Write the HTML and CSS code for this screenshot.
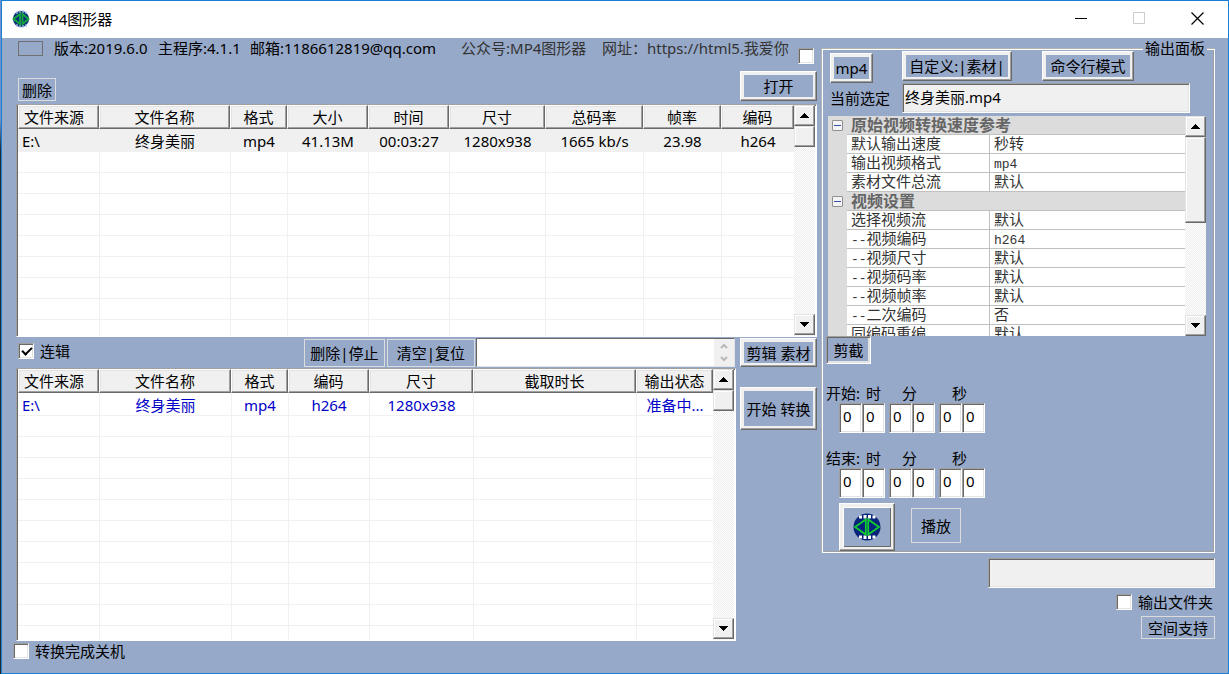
FILE: index.html
```html
<!DOCTYPE html>
<html lang="zh-CN">
<head>
<meta charset="utf-8">
<meta name="viewport" content="width=device-width, initial-scale=1">
<title>MP4图形器</title>
<link rel="stylesheet" href="styles.css">
</head>
<body>
<svg class="defs" aria-hidden="true">
  <symbol id="logo" viewBox="0 0 28 28">
    <circle cx="14" cy="14" r="13.5" fill="#06257a"/>
    <path d="M6 2.500h3v3H6zM10.500 2h3v3.500h-3zM15 2h3v3.500h-3zM19.500 2.500h3v3h-3zM6 22.500h3v3H6zM10.500 22.500h3v3.500h-3zM15 22.500h3v3.500h-3zM19.500 22.500h3v3h-3z" fill="#fff"/>
    <path d="M12.800 6.500V21.500L2 14zM15.200 6.500V21.500L26 14z" fill="none" stroke="#10d030" stroke-width="1.700"/>
  </symbol>
  <symbol id="logo-small" viewBox="0 0 18 18">
    <circle cx="9" cy="9" r="8" fill="#0b3278"/>
    <path d="M5 1v3M8 0v3M11 0v3M14 1v3M5 14v3M8 15v3M11 15v3M14 14v3" stroke="#a9c6e8" stroke-width="1.200"/>
    <path d="M8 4V14L1.500 9zM10.500 4V14L16.500 9z" fill="none" stroke="#12a83c" stroke-width="1.800"/>
  </symbol>
  <symbol id="up" viewBox="0 0 9 5"><path d="M4 0h1v1h1v1h1v1h1v1h1v1H0V4h1V3h1V2h1V1h1z"/></symbol>
  <symbol id="down" viewBox="0 0 9 5"><path d="M0 0h9v1H8v1H7v1H6v1H5v1H4V4H3V3H2V2H1V1H0z"/></symbol>
</svg>
<div class="window">
  <header class="titlebar">
    <svg class="app-icon" aria-hidden="true"><use href="#logo-small"/></svg>
    <h1 class="title">MP4图形器</h1>
    <button class="win-btn" aria-label="最小化"><svg viewBox="0 0 13 13"><path d="M0 6.500h12" stroke="#000"/></svg></button>
    <button class="win-btn" aria-label="最大化" disabled><svg viewBox="0 0 13 13"><path d="M.5.500h11v11H.5z" stroke="#ccc" fill="none"/></svg></button>
    <button class="win-btn" aria-label="关闭"><svg viewBox="0 0 13 13"><path d="M.5.500l12 12M12.500.500l-12 12" stroke="#000" stroke-width="1.200"/></svg></button>
  </header>
  <main class="content">
    <div class="left">
      <div class="info">
        <span class="swatch"></span>
        <span>版本:2019.6.0</span>
        <span>主程序:4.1.1</span>
        <span>邮箱:1186612819@qq.com</span>
        <span class="extra">公众号:MP4图形器</span>
        <span class="extra">网址：https://html5.我爱你</span>
        <input class="check info-check" type="checkbox" aria-label="网址">
      </div>
      <div class="actions">
        <button class="flat small">删除</button>
        <button class="raised side">打开</button>
      </div>
      <section class="list source">
        <div class="view">
          <table class="files">
            <colgroup><col class="w81"><col class="w131"><col class="w57"><col class="w81"><col class="w81"><col class="w96"><col class="w98"><col class="w78"><col></colgroup>
            <thead><tr><th>文件来源</th><th>文件名称</th><th>格式</th><th>大小</th><th>时间</th><th>尺寸</th><th>总码率</th><th>帧率</th><th>编码</th></tr></thead>
            <tbody>
              <tr class="selected"><td>E:\</td><td>终身美丽</td><td>mp4</td><td>41.13M</td><td>00:03:27</td><td>1280x938</td><td>1665 kb/s</td><td>23.98</td><td>h264</td></tr>
              <tr><td><td><td><td><td><td><td><td><td></tr>
              <tr><td><td><td><td><td><td><td><td><td></tr>
              <tr><td><td><td><td><td><td><td><td><td></tr>
              <tr><td><td><td><td><td><td><td><td><td></tr>
              <tr><td><td><td><td><td><td><td><td><td></tr>
              <tr><td><td><td><td><td><td><td><td><td></tr>
              <tr><td><td><td><td><td><td><td><td><td></tr>
              <tr><td><td><td><td><td><td><td><td><td></tr>
              <tr><td><td><td><td><td><td><td><td><td></tr>
            </tbody>
          </table>
        </div>
        <div class="scroll">
          <button class="arrow" aria-label="向上"><svg><use href="#up"/></svg></button>
          <span class="thumb"></span>
          <button class="arrow last" aria-label="向下"><svg><use href="#down"/></svg></button>
        </div>
      </section>
      <div class="lower">
        <div class="tasks">
          <div class="toolbar">
            <label class="check-label"><input class="check" type="checkbox" checked>连辑</label>
            <button class="flat stop">删除|停止</button>
            <button class="flat clear">清空|复位</button>
            <div class="memo">
              <textarea class="memo-text" aria-label="输出信息"></textarea>
              <div class="spin" aria-hidden="true">
                <svg viewBox="0 0 8 6"><path d="M1 5l3-3 3 3" /></svg>
                <svg viewBox="0 0 8 6"><path d="M1 1l3 3 3-3" /></svg>
              </div>
            </div>
          </div>
          <section class="list queue">
            <div class="view">
              <table class="files">
                <colgroup><col class="w81"><col class="w132"><col class="w57"><col class="w81"><col class="w104"><col class="w163"><col></colgroup>
                <thead><tr><th>文件来源</th><th>文件名称</th><th>格式</th><th>编码</th><th>尺寸</th><th>截取时长</th><th>输出状态</th></tr></thead>
                <tbody>
                  <tr class="pending"><td>E:\</td><td>终身美丽</td><td>mp4</td><td>h264</td><td>1280x938</td><td></td><td>准备中...</td></tr>
                  <tr><td><td><td><td><td><td><td></tr>
                  <tr><td><td><td><td><td><td><td></tr>
                  <tr><td><td><td><td><td><td><td></tr>
                  <tr><td><td><td><td><td><td><td></tr>
                  <tr><td><td><td><td><td><td><td></tr>
                  <tr><td><td><td><td><td><td><td></tr>
                  <tr><td><td><td><td><td><td><td></tr>
                  <tr><td><td><td><td><td><td><td></tr>
                  <tr><td><td><td><td><td><td><td></tr>
                  <tr><td><td><td><td><td><td><td></tr>
                  <tr><td><td><td><td><td><td><td></tr>
                </tbody>
              </table>
            </div>
            <div class="scroll">
              <button class="arrow" aria-label="向上"><svg><use href="#up"/></svg></button>
              <span class="thumb"></span>
              <button class="arrow last" aria-label="向下"><svg><use href="#down"/></svg></button>
            </div>
          </section>
        </div>
        <div class="side-buttons">
          <button class="raised">剪辑 素材</button>
          <button class="raised tall">开始 转换</button>
        </div>
      </div>
      <label class="check-label shutdown"><input class="check" type="checkbox">转换完成关机</label>
    </div>
    <div class="right">
      <fieldset class="panel">
        <legend class="legend">输出面板</legend>
        <div class="modes">
          <button class="raised format">mp4</button>
          <button class="raised custom">自定义:|素材|</button>
          <button class="raised command">命令行模式</button>
        </div>
        <div class="current">
          <label for="current">当前选定</label>
          <input id="current" class="field readonly" type="text" value="终身美丽.mp4" readonly>
        </div>
        <div class="props">
          <div class="view">
            <table class="grid">
              <colgroup><col class="gutter"><col class="key"><col></colgroup>
              <tbody>
                <tr class="cat"><td><button class="toggle" aria-label="折叠"></button></td><th colspan="2">原始视频转换速度参考</th></tr>
                <tr><td></td><td>默认输出速度</td><td>秒转</td></tr>
                <tr><td></td><td>输出视频格式</td><td><span class="mono">mp4</span></td></tr>
                <tr><td></td><td>素材文件总流</td><td>默认</td></tr>
                <tr class="cat"><td><button class="toggle" aria-label="折叠"></button></td><th colspan="2">视频设置</th></tr>
                <tr><td></td><td>选择视频流</td><td>默认</td></tr>
                <tr><td></td><td><span class="mono">--</span>视频编码</td><td><span class="mono">h264</span></td></tr>
                <tr><td></td><td><span class="mono">--</span>视频尺寸</td><td>默认</td></tr>
                <tr><td></td><td><span class="mono">--</span>视频码率</td><td>默认</td></tr>
                <tr><td></td><td><span class="mono">--</span>视频帧率</td><td>默认</td></tr>
                <tr><td></td><td><span class="mono">--</span>二次编码</td><td>否</td></tr>
                <tr><td></td><td>同编码重编</td><td>默认</td></tr>
              </tbody>
            </table>
          </div>
          <div class="scroll">
            <button class="arrow" aria-label="向上"><svg><use href="#up"/></svg></button>
            <span class="thumb long"></span>
            <button class="arrow last" aria-label="向下"><svg><use href="#down"/></svg></button>
          </div>
        </div>
        <button class="sunken">剪截</button>
        <div class="time" role="group" aria-label="开始">
          <div class="time-labels"><span>开始:</span><label for="s1">时</label><label for="s3">分</label><label for="s5">秒</label></div>
          <div class="time-fields">
            <div class="pair"><input id="s1" class="field digit" value="0"><input class="field digit" value="0" aria-label="时"></div>
            <div class="pair"><input id="s3" class="field digit" value="0"><input class="field digit" value="0" aria-label="分"></div>
            <div class="pair"><input id="s5" class="field digit" value="0"><input class="field digit" value="0" aria-label="秒"></div>
          </div>
        </div>
        <div class="time" role="group" aria-label="结束">
          <div class="time-labels"><span>结束:</span><label for="e1">时</label><label for="e3">分</label><label for="e5">秒</label></div>
          <div class="time-fields">
            <div class="pair"><input id="e1" class="field digit" value="0"><input class="field digit" value="0" aria-label="时"></div>
            <div class="pair"><input id="e3" class="field digit" value="0"><input class="field digit" value="0" aria-label="分"></div>
            <div class="pair"><input id="e5" class="field digit" value="0"><input class="field digit" value="0" aria-label="秒"></div>
          </div>
        </div>
        <div class="play-row">
          <button class="raised logo-btn" aria-label="MP4图形器"><svg class="logo"><use href="#logo"/></svg></button>
          <button class="flat play">播放</button>
        </div>
      </fieldset>
      <div class="output">
        <input class="field readonly path" type="text" aria-label="输出路径" readonly>
        <label class="check-label"><input class="check" type="checkbox">输出文件夹</label>
        <button class="flat support">空间支持</button>
      </div>
    </div>
  </main>
</div>
</body>
</html>
```

FILE: styles.css
```css
:root {
  --blue: #97a9c8;
  --face: #f0f0f0;
  --light: #e3e3e3;
  --shadow: #a0a0a0;
  --dark: #696969;
  --accent: #1a7fd4;
}

* { box-sizing: border-box; }

body {
  margin: 0;
  padding-left: 1px;
  background: linear-gradient(#6d92cc 0, #6d92cc 120px, #222a33 150px);
  color: #000;
  font: 15px/20px "Noto Sans", "Noto Sans CJK SC", sans-serif;
}

button, input, textarea {
  font: inherit;
  color: inherit;
  margin: 0;
  padding: 0;
}

button { white-space: nowrap; }
.defs { display: none; }

.window {
  display: flex;
  flex-direction: column;
  height: 100vh;
  min-height: 640px;
  border: 1px solid var(--accent);
  background: var(--blue);
}

/* Title bar */
.titlebar {
  display: flex;
  align-items: center;
  height: 37px;
  padding: 0 2px 2px 10px;
  background: #fff;
}
.app-icon { width: 18px; height: 18px; margin-right: 6px; }
.title { flex: 1; margin: 0; font-size: 15px; font-weight: 400; }
.win-btn {
  display: grid;
  place-items: center;
  width: 58px;
  height: 35px;
  border: 0;
  background: none;
}
.win-btn svg { width: 13px; height: 13px; }

.content {
  flex: 1;
  min-height: 0;
  display: grid;
  grid-template-columns: minmax(0, 1fr) 393px;
  gap: 5px;
  padding: 0 13px 0 14px;
}

/* Buttons */
.flat {
  border: 1px solid #dcdcdc;
  background: var(--blue);
}
.small { width: 38px; height: 23px; }
.raised {
  height: 30px;
  border: 1px solid;
  border-color: #fff var(--dark) var(--dark) #fff;
  background: var(--blue);
  box-shadow: inset -1px -1px var(--shadow), inset 0 0 0 3px var(--face);
}
.sunken {
  display: block;
  width: 45px;
  height: 28px;
  margin-left: 3px;
  border: 1px solid;
  border-color: var(--shadow) #fff #fff var(--shadow);
  background: var(--blue);
  box-shadow: inset 1px 1px var(--dark), inset -2px -2px var(--light);
}

/* Check boxes */
.check {
  appearance: none;
  flex: none;
  width: 16px;
  height: 16px;
  border: 1px solid;
  border-color: var(--shadow) #fff #fff var(--shadow);
  background: #fff;
  box-shadow: inset 1px 1px var(--dark), inset -1px -1px var(--light);
}
.check:checked::before {
  content: "";
  display: block;
  width: 8px;
  height: 4px;
  margin: 3px;
  border: solid #000;
  border-width: 0 0 2px 2px;
  transform: rotate(-45deg);
}
.check-label { display: flex; align-items: center; gap: 6px; }

/* Text fields */
.field {
  height: 30px;
  min-width: 0;
  padding: 0 2px 4px;
  border: 1px solid;
  border-color: var(--shadow) #fff #fff var(--shadow);
  border-radius: 0;
  background: #fff;
  box-shadow: inset 1px 1px var(--dark), inset -1px -1px var(--light);
}
.readonly { background: var(--face); }

/* Left side */
.left { display: flex; flex-direction: column; min-height: 0; }
.info {
  display: grid;
  grid-template-columns: 36px 104px 92px 211px 141px 1fr 16px;
  height: 26px;
  padding: 0 3px 0 2px;
  white-space: nowrap;
}
.swatch { width: 25px; height: 15px; margin-top: 3px; border: 1px solid #707070; }
.extra { color: #333; }
.info-check { align-self: end; }
.actions {
  display: flex;
  justify-content: space-between;
  align-items: flex-end;
  padding: 7px 0 3px 2px;
}
.side { width: 77px; }

.list {
  display: flex;
  min-height: 0;
  border: 1px solid;
  border-color: var(--shadow) #fff #fff var(--shadow);
  background: #fff;
  box-shadow: inset 1px 1px var(--dark);
}
.source { flex: 232 1 0; }
.queue { flex: 1 1 0; margin-top: 1px; }
.view { flex: 1; min-width: 0; overflow: hidden; }
.list .view { margin-left: 1px; }

.files {
  width: 100%;
  table-layout: fixed;
  border-collapse: separate;
  border-spacing: 0;
}
.files th {
  height: 24px;
  padding: 0;
  border: 1px solid;
  border-color: #fff var(--dark) var(--dark) #fff;
  background: var(--face);
  box-shadow: inset -1px -1px var(--shadow), inset 1px 1px var(--light);
  font-weight: 400;
  line-height: 18px;
  white-space: nowrap;
}
.files th:first-child { padding-left: 5px; text-align: left; }
.files td {
  height: 21px;
  padding: 0;
  border: solid var(--face);
  border-width: 0 0 1px 1px;
  line-height: 20px;
  text-align: center;
  white-space: nowrap;
}
.files td:first-child { padding-left: 4px; border-left: 0; text-align: left; }
.files tbody tr:first-child td { height: 23px; padding-top: 2px; }
.selected { background: var(--face); }
.pending { color: #0000c8; }
.w57 { width: 57px; }
.w78 { width: 78px; }
.w81 { width: 81px; }
.w96 { width: 96px; }
.w98 { width: 98px; }
.w104 { width: 104px; }
.w131 { width: 131px; }
.w132 { width: 132px; }
.w163 { width: 163px; }

/* Scroll bars */
.scroll {
  display: flex;
  flex-direction: column;
  width: 21px;
  background: conic-gradient(#fff 25%, #ececec 0 50%, #fff 0 75%, #ececec 0) 0 0 / 2px 2px;
}
.list .scroll { margin-right: 1px; }
.arrow, .thumb {
  display: grid;
  place-items: center;
  flex: none;
  height: 21px;
  border: 1px solid;
  border-color: var(--light) var(--dark) var(--dark) var(--light);
  background: var(--face);
  box-shadow: inset -1px -1px var(--shadow), inset 1px 1px #fff;
}
.arrow svg { width: 9px; height: 5px; }
.long { height: 86px; }
.last { margin-top: auto; }
.list .last { margin-bottom: 1px; }

.lower { flex: 304 1 0; min-height: 0; display: flex; gap: 4px; margin-top: 1px; }
.tasks { flex: 1; min-width: 0; display: flex; flex-direction: column; }
.toolbar { display: flex; align-items: center; height: 29px; padding: 0 1px 0 2px; }
.toolbar .check-label { flex: 1; padding-bottom: 3px; }
.stop { width: 81px; height: 28px; margin-right: 2px; }
.clear { width: 88px; height: 28px; margin-right: 1px; }
.memo {
  display: flex;
  width: 259px;
  height: 29px;
  border: 1px solid;
  border-color: var(--dark) var(--light) var(--light) var(--dark);
  background: #fff;
}
.memo-text { flex: 1; min-width: 0; border: 0; resize: none; background: none; }
.spin {
  display: flex;
  flex-direction: column;
  justify-content: space-around;
  align-items: center;
  width: 20px;
  background: var(--face);
}
.spin svg { width: 8px; height: 6px; fill: none; stroke: #b8b8b8; stroke-width: 2; }
.side-buttons { display: flex; flex-direction: column; gap: 20px; width: 77px; }
.side-buttons .raised { height: 29px; }
.side-buttons .tall { height: 43px; }
.shutdown { height: 32px; margin-left: -3px; padding-bottom: 12px; }

/* Output panel */
.right { min-width: 0; }
.panel {
  position: relative;
  min-width: 0;
  margin: 11px 0 0;
  padding: 1px 0;
  border: 1px solid #fff;
  box-shadow: inset -1px -1px var(--shadow), -1px -1px #b4b4b0;
}
.legend {
  position: absolute;
  top: -12px;
  right: 7px;
  padding: 0 2px;
  background: var(--blue);
}
.modes { display: flex; height: 32px; padding-left: 7px; }
.format { width: 43px; align-self: flex-end; }
.custom { width: 110px; margin-left: 29px; }
.command { width: 92px; margin-left: 30px; }
.current { display: flex; align-items: center; gap: 12px; padding: 0 24px 3px 7px; }
.current .field { flex: 1; }

.props {
  display: flex;
  height: 220px;
  margin: 0 8px 0 5px;
  background: #fff;
  color: #333;
}
.grid {
  width: 100%;
  table-layout: fixed;
  border-collapse: separate;
  border-spacing: 0;
  font-family: "Noto Sans CJK SC", sans-serif;
  line-height: 16px;
}
.gutter { width: 19px; }
.key { width: 143px; }
.grid td, .grid th {
  height: 19px;
  padding: 0 4px;
  border-bottom: 1px solid #c0c0c0;
  vertical-align: top;
  white-space: nowrap;
}
.grid td:first-child { padding: 0; border-color: #dcdcdc; background: #dcdcdc; vertical-align: middle; }
.grid td:nth-child(2) { border-right: 1px solid #c0c0c0; }
.grid th { background: #dcdcdc; color: #666; font-size: 16px; text-align: left; }
.mono { font-family: "Liberation Mono", monospace; font-size: 13px; line-height: 1; }
.toggle {
  display: block;
  width: 11px;
  height: 11px;
  margin: 0 auto;
  border: 1px solid #909090;
  border-radius: 1px;
  background: linear-gradient(#3050b0, #3050b0) center / 7px 1px no-repeat, #f4f4f4;
}

/* Time pickers */
.time { margin: 19px 0 0 3px; }
.time + .time { margin-top: 15px; }
.time-labels { display: grid; grid-template-columns: 40px 36px 50px auto; }
.time-fields { display: flex; gap: 4px; padding-left: 13px; }
.pair { display: flex; }
.digit { width: 23px; padding-left: 3px; }

.play-row { display: flex; gap: 16px; padding: 5px 0 0 16px; }
.logo-btn {
  display: grid;
  place-items: center;
  width: 56px;
  height: 48px;
  box-shadow: inset -1px -1px var(--shadow), inset 0 0 0 3px var(--face), inset 4px 4px #fff, inset -4px -4px var(--dark);
}
.logo { width: 28px; height: 28px; }
.play { width: 50px; height: 35px; margin-top: 5px; }

.output { display: flex; flex-direction: column; align-items: flex-end; padding-top: 5px; }
.path { width: 227px; }
.output .check-label { height: 28px; padding-right: 2px; }
.support { width: 74px; height: 23px; }
```
